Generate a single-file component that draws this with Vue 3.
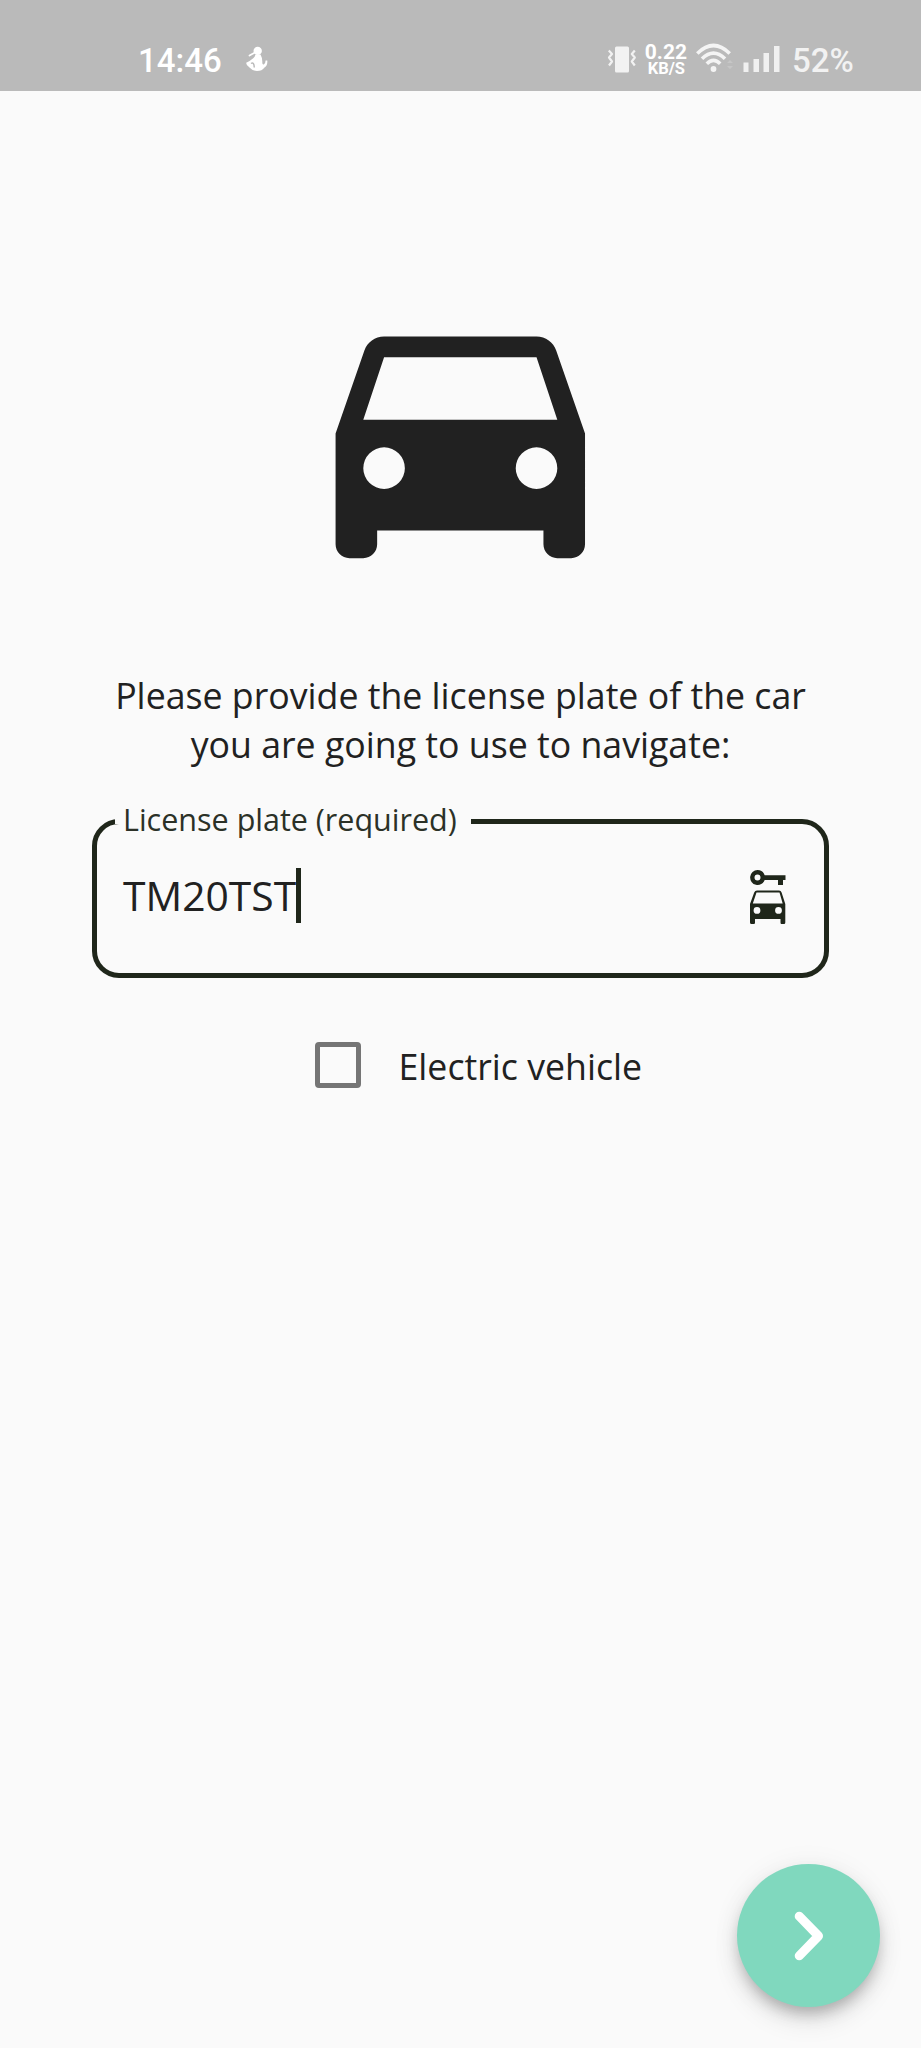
<script setup>
import { ref } from 'vue'

const plate = ref('TM20TST')
const electric = ref(false)
</script>

<template>
  <div class="screen">
    <header class="status">
      <span class="clock">14:46</span>
      <svg class="notif" width="24" height="28" viewBox="0 0 24 28">
        <circle cx="12.700" cy="4.900" r="4.200" fill="#fff" />
        <path d="M9.500 6.800L4.500 9.500" fill="none" stroke="#fff" stroke-width="1.800" stroke-linecap="round" />
        <path d="M10.500 8.500H15.500Q17.500 12 17.300 16.500Q17.300 19 18.800 18.500Q20.500 17.500 20.600 14.500H22.300Q22.800 19.500 19.500 21.500Q17 25 12 25Q7.500 25 4.500 21.500Q1 19.500 1.200 16.800Q4.500 15.500 8.500 12Q10 10.500 10.500 8.500Z" fill="#fff" />
        <path d="M6 17.500Q9 15.500 9.300 21.500" fill="none" stroke="#bababa" stroke-width="1.500" />
      </svg>
      <span class="spacer"></span>
      <svg class="vibrate" width="30" height="28" viewBox="0 0 30 28">
        <rect x="8" y="0.500" width="14" height="26" rx="1.500" fill="#f2f2f2" />
        <path d="M1.800 4.500L5 8L2 11.500L5 15.500L2 19.500M27.800 4.500L24.800 8L27.800 11.500L24.800 15.500L27.800 19.500" fill="none" stroke="#f2f2f2" stroke-width="2.200" stroke-linejoin="round" />
      </svg>
      <div class="speed"><b>0.22</b><b class="unit">KB/S</b></div>
      <svg class="wifi" width="38" height="30" viewBox="0 0 38 30">
        <g fill="none" stroke="#f4f4f4" stroke-width="3.600">
          <path d="M1.300 10.500Q17.500-5.500 33.700 10.500" />
          <path d="M6 15.700Q17.500 4.500 29 15.700" />
          <path d="M10.800 20.700Q17.500 14 24.200 20.700" />
        </g>
        <circle cx="17.500" cy="26" r="2.900" fill="#f4f4f4" />
        <path d="M31 20l3-3 3 3zM31 23l3 3 3-3z" fill="#c6c6c6" />
      </svg>
      <svg class="signal" width="38" height="28" viewBox="0 0 38 28" fill="#f0f0f0">
        <rect x="0.500" y="16.500" width="5" height="9.500" />
        <rect x="10.500" y="13" width="5.500" height="13" />
        <rect x="20.500" y="7" width="5.500" height="19" />
        <rect x="31" y="0" width="5.500" height="26" />
      </svg>
      <span class="battery">52%</span>
    </header>

    <main class="content">
      <svg class="car" viewBox="0 0 24 24">
        <path
          fill="#212121"
          fill-rule="evenodd"
          d="M18.920 6.010C18.720 5.420 18.160 5 17.500 5h-11c-.66 0-1.210.42-1.420 1.010L3 12v8c0 .55.45 1 1 1h1c.55 0 1-.45 1-1v-1h12v1c0 .55.45 1 1 1h1c.55 0 1-.45 1-1v-8l-2.080-5.990zM6.500 16a1.500 1.500 0 1 1 0-3a1.500 1.500 0 0 1 0 3zM17.500 16a1.500 1.500 0 1 1 0-3a1.500 1.500 0 0 1 0 3zM5 11l1.500-4.500h11L19 11H5z"
        />
      </svg>

      <p class="prompt"><span>Please provide the license plate of the car</span><br /><span>you are going to use to navigate:</span></p>

      <fieldset class="field">
        <legend><span>License plate (required)</span></legend>
        <div class="row">
          <span class="value">{{ plate }}</span>
          <i class="caret"></i>
          <svg class="carkey" width="38" height="56" viewBox="0 0 38 56">
            <g fill="#1f261a">
              <path fill-rule="evenodd" d="M8.500 1a7.500 7.500 0 0 1 7.200 5.200H36.500V11H34v5H29v-5H15.700A7.500 7.500 0 1 1 8.500 1zM8.500 5.500a3 3 0 1 0 0 6a3 3 0 0 0 0-6z" />
              <path fill-rule="evenodd" d="M8 21.500H30Q32 21.500 32.600 23.500L36.300 35V53.500Q36.300 55 35 55H32.500Q31.500 55 31.500 53.500V50H6V53.500Q6 55 5 55H2.500Q1 55 1 53.500V35L5.200 23.500Q6 21.500 8 21.500zM7.500 23.600L3.800 34.500H33.700L30.500 23.600zM8 38a3.400 3.400 0 1 0 0 6.800a3.400 3.400 0 0 0 0-6.800zM29.500 38a3.400 3.400 0 1 0 0 6.800a3.400 3.400 0 0 0 0-6.800z" />
            </g>
          </svg>
        </div>
      </fieldset>

      <div class="option" role="checkbox" :aria-checked="electric" @click="electric = !electric">
        <span class="box"></span>
        <span class="label">Electric vehicle</span>
      </div>
    </main>

    <button class="fab" aria-label="Next">
      <svg width="40" height="60" viewBox="0 0 40 60">
        <path d="M10.200 10.200L29.500 30L10.200 49.800" fill="none" stroke="#fff" stroke-width="9" stroke-linecap="round" stroke-linejoin="round" />
      </svg>
    </button>
  </div>
</template>

<style>
body {
  background: #fafafa;
}
</style>

<style scoped>
.screen {
  position: relative;
  width: 921px;
  height: 2048px;
  overflow: hidden;
  background: #fafafa;
  color: #212121;
  font-family: "Open Sans", "Noto Sans", sans-serif;
}
.status {
  display: flex;
  align-items: flex-start;
  box-sizing: border-box;
  height: 91px;
  padding: 46px 67px 0 138px;
  background: #bababa;
  color: #fff;
  font-family: Roboto, sans-serif;
}
.clock {
  font-size: 33px;
  font-weight: 500;
  line-height: 29px;
  width: 106.500px;
}
.spacer {
  flex: 1;
}
.vibrate {
  margin-right: 7px;
}
.speed {
  display: flex;
  flex-direction: column;
  align-items: flex-end;
  width: 43px;
  margin-top: -4px;
  font-size: 21px;
  line-height: 20px;
}
.unit {
  font-size: 16.500px;
  line-height: 14px;
  margin-right: 2px;
}
.wifi {
  margin: -3px 9px 0 9px;
}
.signal {
  margin-right: 11px;
}
.battery {
  width: 62px;
  font-size: 33px;
  font-weight: 500;
  line-height: 29px;
  color: #f2f2f2;
}
.content {
  display: flex;
  flex-direction: column;
  align-items: center;
}
.car {
  width: 332.600px;
  height: 333px;
  margin-top: 176px;
}
.prompt {
  margin: 71px 0 0;
  text-align: center;
  font-size: 35.700px;
  line-height: 49px;
  white-space: nowrap;
}
.field {
  box-sizing: border-box;
  width: 737px;
  height: 159px;
  min-width: 0;
  margin: 50px 0 0;
  padding: 0 18px;
  border: 5px solid #1f261a;
  border-radius: 27px;
}
legend {
  width: 356px;
  height: 5px;
  box-sizing: border-box;
  padding: 0 0 0 8px;
  font-size: 30.500px;
  line-height: 0;
  color: #2b3127;
  white-space: nowrap;
}
.row {
  display: flex;
  align-items: center;
  height: 143px;
}
.value {
  font-size: 40.800px;
  line-height: 54px;
  padding: 0 0 2px 8px;
}
.caret {
  width: 5px;
  height: 55px;
  background: #1f261a;
}
.carkey {
  margin: 2px 19.500px 0 auto;
}
.option {
  display: flex;
  align-items: center;
  align-self: flex-start;
  height: 60px;
  margin: 57px 0 0 314.500px;
}
.box {
  box-sizing: border-box;
  width: 46px;
  height: 46px;
  border: 5px solid #757575;
  border-radius: 4px;
}
.label {
  margin: 2px 0 0 38px;
  font-size: 35.700px;
  line-height: 49px;
}
.fab {
  position: absolute;
  right: 41px;
  bottom: 41px;
  display: flex;
  align-items: center;
  justify-content: center;
  width: 143px;
  height: 143px;
  padding: 0;
  border: 0;
  border-radius: 50%;
  background: #80d8be;
  box-shadow: 0 9px 14px -3px rgba(0, 0, 0, 0.220), 0 14px 26px rgba(0, 0, 0, 0.100), 0 2px 30px rgba(0, 0, 0, 0.060);
}
</style>
